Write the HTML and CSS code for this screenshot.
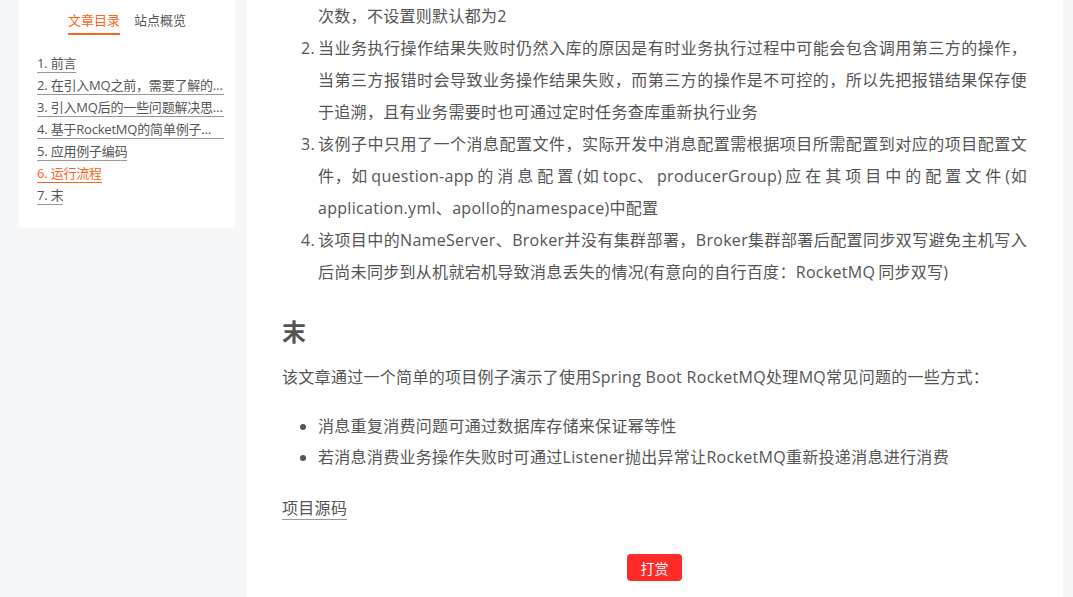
FILE: index.html
```html
<!DOCTYPE html>
<html lang="zh-CN">

<head>
    <meta charset="UTF-8">
    <meta name="viewport" content="width=device-width, initial-scale=1.0">
    <title>Spring Boot RocketMQ 处理 MQ 常见问题</title>
    <link rel="stylesheet" href="styles.css">
</head>

<body>
    <div class="page">
        <aside class="sidebar">
            <div class="sidebar-tabs">
                <span class="tab active">文章目录</span>
                <span class="tab">站点概览</span>
            </div>
            <ol class="toc">
                <li><a href="#" class="toc-link">1. 前言</a></li>
                <li><a href="#" class="toc-link">2. 在引入MQ之前，需要了解的一些概念</a></li>
                <li><a href="#" class="toc-link">3. 引入MQ后的一些问题解决思路</a></li>
                <li><a href="#" class="toc-link">4. 基于RocketMQ的简单例子实现</a></li>
                <li><a href="#" class="toc-link">5. 应用例子编码</a></li>
                <li><a href="#" class="toc-link active">6. 运行流程</a></li>
                <li><a href="#" class="toc-link">7. 末</a></li>
            </ol>
        </aside>

        <main class="post">
            <ol class="post-list">
                <li class="cont">次数，不设置则默认都为2</li>
                <li>当业务执行操作结果失败时仍然入库的原因是有时业务执行过程中可能会包含调用第三方的操作，当第三方报错时会导致业务操作结果失败，而第三方的操作是不可控的，所以先把报错结果保存便于追溯，且有业务需要时也可通过定时任务查库重新执行业务</li>
                <li>该例子中只用了一个消息配置文件，实际开发中消息配置需根据项目所需配置到对应的项目配置文件，如 question-app 的 消 息 配 置 (如 topc、 producerGroup) 应 在 其 项 目 中 的 配 置 文 件 (如 application.yml、apollo的namespace)中配置</li>
                <li>该项目中的NameServer、Broker并没有集群部署，Broker集群部署后配置同步双写避免主机写入后尚未同步到从机就宕机导致消息丢失的情况(有意向的自行百度：RocketMQ 同步双写)</li>
            </ol>

            <h2 class="post-heading">末</h2>
            <p class="post-text">该文章通过一个简单的项目例子演示了使用Spring Boot RocketMQ处理MQ常见问题的一些方式：</p>
            <ul class="post-bullets">
                <li>消息重复消费问题可通过数据库存储来保证幂等性</li>
                <li>若消息消费业务操作失败时可通过Listener抛出异常让RocketMQ重新投递消息进行消费</li>
            </ul>
            <p class="post-text source"><a href="#" class="post-link">项目源码</a></p>

            <div class="reward">
                <button class="reward-button">打赏</button>
            </div>
        </main>
    </div>
</body>

</html>
```

FILE: styles.css
```css
body {
    margin: 0;
    background: #f5f7f9;
    color: #555;
    font-family: "Open Sans", "Noto Sans CJK SC", sans-serif;
    height: 597px;
    overflow: hidden;
}

a {
    color: #555;
    text-decoration: none;
}

.page {
    display: flex;
    align-items: flex-start;
    gap: 11px;
    padding-left: 19px;
}

/* sidebar */

.sidebar {
    width: 216px;
    flex-shrink: 0;
    background: #fff;
    padding: 10px 0 21px;
    box-sizing: border-box;
    border-radius: 0 0 2px 2px;
}

.sidebar-tabs {
    display: flex;
    justify-content: center;
    gap: 14px;
    font-size: 13px;
    line-height: 20px;
}

.tab {
    padding-bottom: 3px;
    border-bottom: 2px solid transparent;
}

.tab.active {
    color: #fc6423;
    border-bottom-color: #fc6423;
}

.toc {
    list-style: none;
    margin: 18px 0 0;
    padding: 0 11px 0 18px;
    font-size: 13px;
    letter-spacing: -0.2px;
}

.toc li {
    height: 22px;
}

.toc-link {
    display: inline-block;
    max-width: 100%;
    margin-top: 2px;
    line-height: 17px;
    border-bottom: 1px solid #999;
    white-space: nowrap;
    overflow: hidden;
    text-overflow: ellipsis;
    vertical-align: top;
}

.toc-link.active {
    color: #fc6423;
    border-bottom-color: #fc6423;
}

/* post body */

.post {
    width: 817px;
    flex-shrink: 0;
    background: #fff;
    padding: 0 36px 40px;
    box-sizing: border-box;
    min-height: 597px;
    font-size: 16px;
    letter-spacing: 0.3px;
}

.post-list {
    margin: 0;
    padding-left: 36px;
    line-height: 32px;
    text-align: justify;
    word-spacing: -1.5px;
}

.post-list .cont {
    list-style: none;
}

.post-heading {
    margin: 26px 0 11px;
    font-size: 24px;
    line-height: 36px;
    font-weight: bold;
    color: #555;
    letter-spacing: 0;
}

.post-text {
    margin: 0;
    line-height: 32px;
}

.post-bullets {
    margin: 18px 0 0;
    padding-left: 36px;
    line-height: 31px;
}

.source {
    margin-top: 19px;
}

.post-link {
    border-bottom: 1px solid #999;
}

.reward {
    margin-top: 30px;
    text-align: center;
}

.reward-button {
    width: 55px;
    height: 27px;
    padding: 0;
    border: none;
    border-radius: 4px;
    background: #ff2a2a;
    color: #fff;
    font-family: "Open Sans", "Noto Sans CJK SC", sans-serif;
    font-size: 14px;
    letter-spacing: 0;
    cursor: pointer;
}
```
